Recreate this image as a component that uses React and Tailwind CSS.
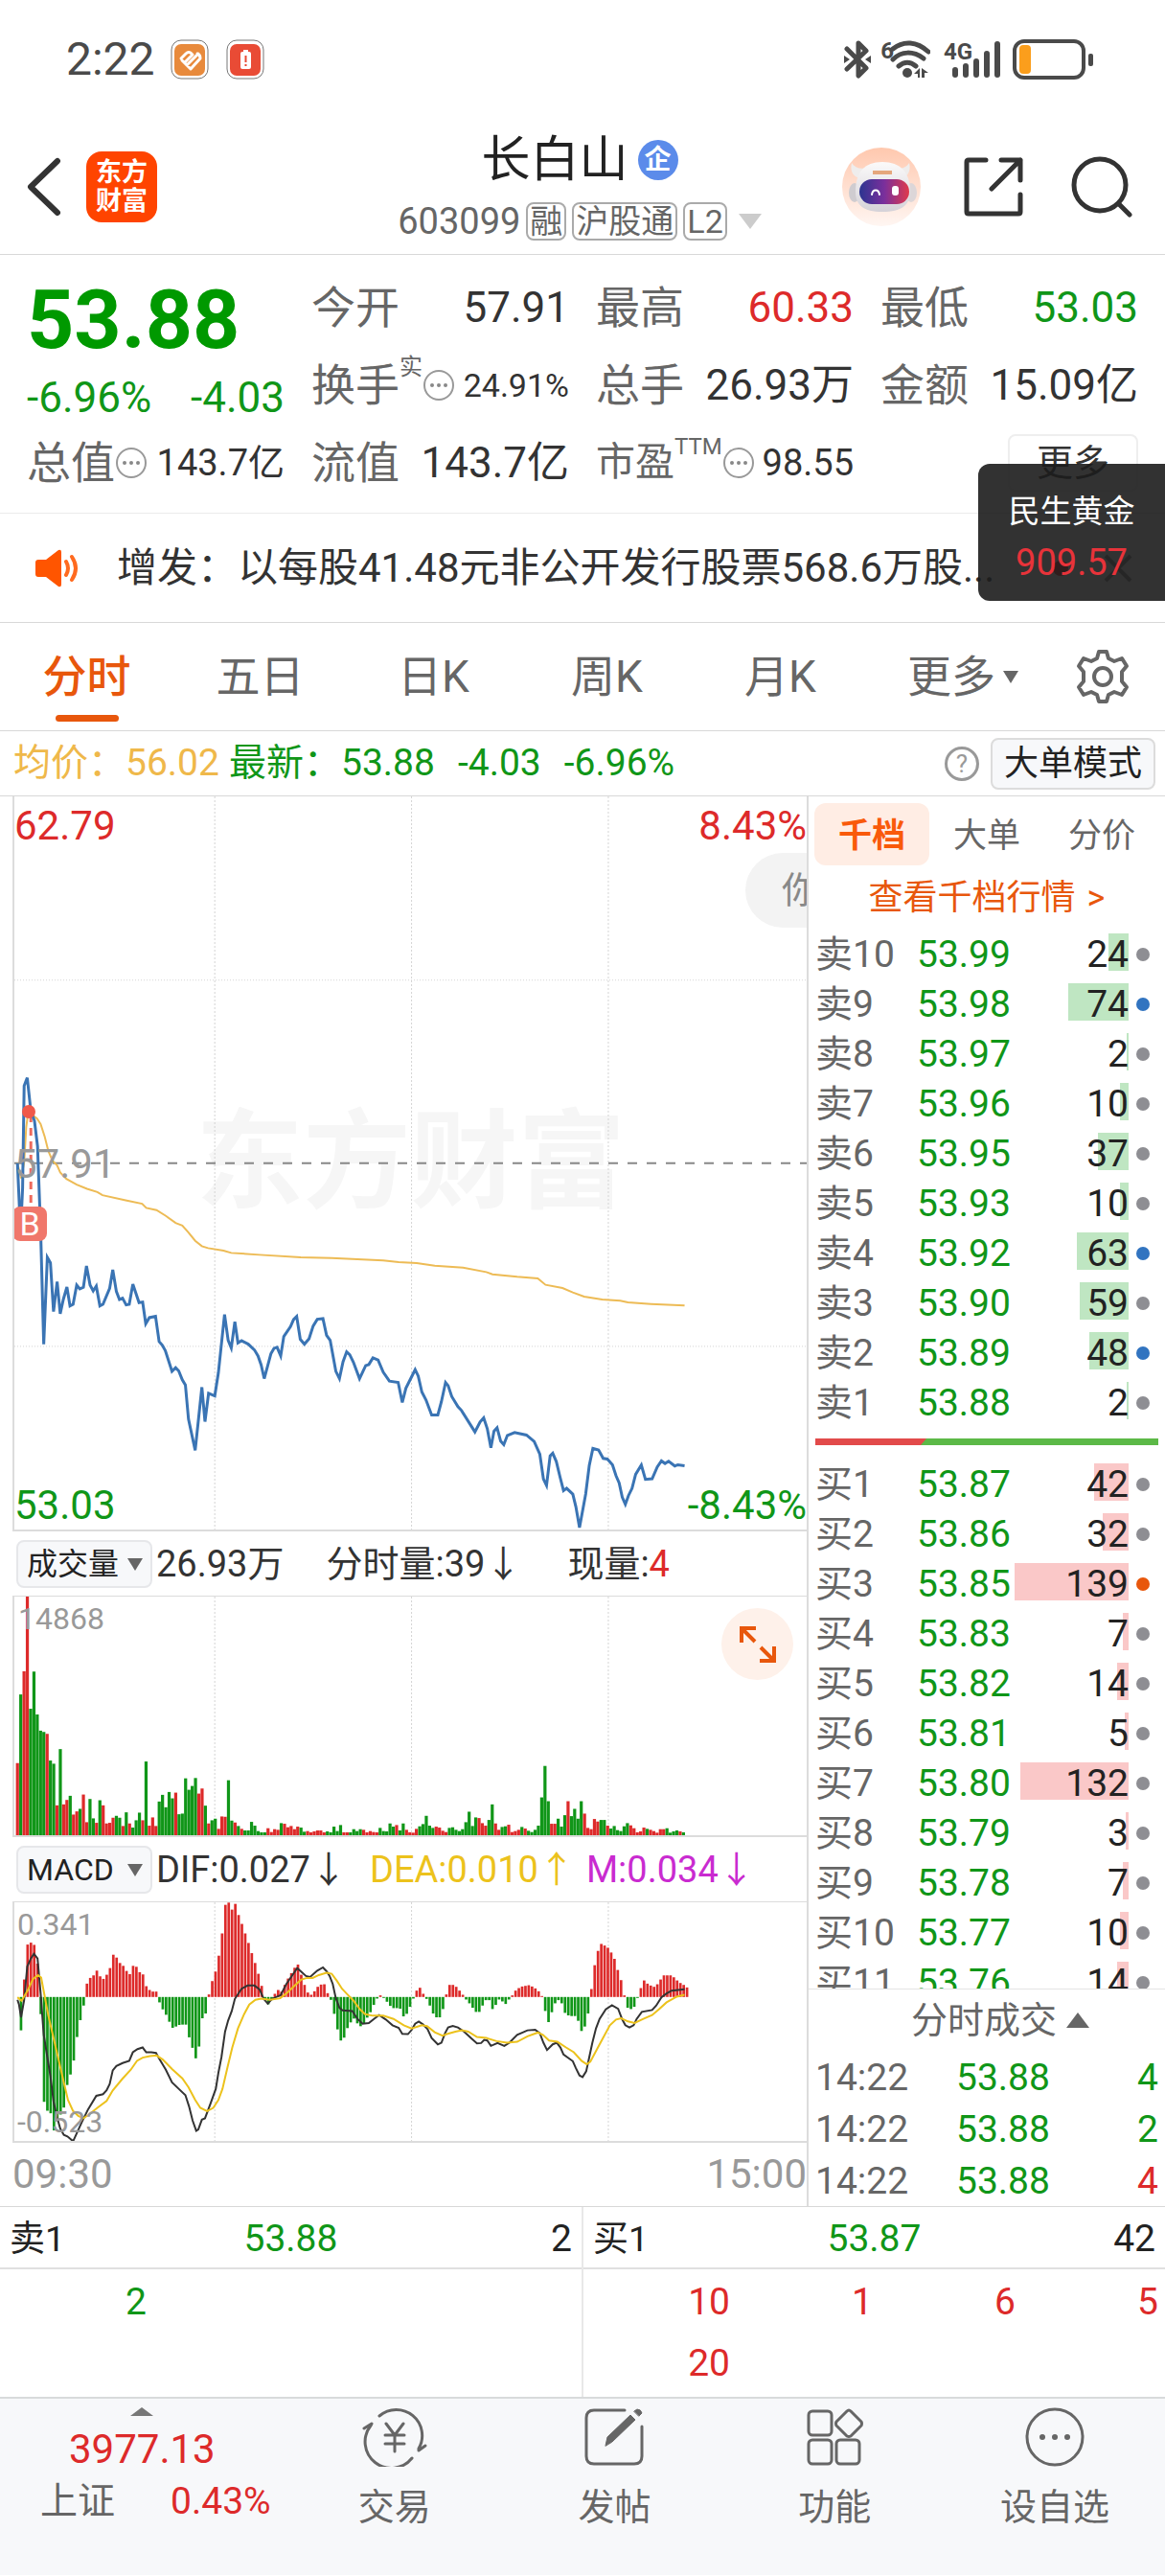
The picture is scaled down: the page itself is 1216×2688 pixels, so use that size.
const ASKS = [
  ["卖10", "53.99", 24, "gray"],
  ["卖9", "53.98", 74, "blue"],
  ["卖8", "53.97", 2, "gray"],
  ["卖7", "53.96", 10, "gray"],
  ["卖6", "53.95", 37, "gray"],
  ["卖5", "53.93", 10, "gray"],
  ["卖4", "53.92", 63, "blue"],
  ["卖3", "53.90", 59, "gray"],
  ["卖2", "53.89", 48, "blue"],
  ["卖1", "53.88", 2, "gray"],
];

const BIDS = [
  ["买1", "53.87", 42, "gray"],
  ["买2", "53.86", 32, "gray"],
  ["买3", "53.85", 139, "orange"],
  ["买4", "53.83", 7, "gray"],
  ["买5", "53.82", 14, "gray"],
  ["买6", "53.81", 5, "gray"],
  ["买7", "53.80", 132, "gray"],
  ["买8", "53.79", 3, "gray"],
  ["买9", "53.78", 7, "gray"],
  ["买10", "53.77", 10, "gray"],
  ["买11", "53.76", 14, "gray"],
];

const TRADES = [
  { time: "14:22", price: "53.88", volume: 4, up: false },
  { time: "14:22", price: "53.88", volume: 2, up: false },
  { time: "14:22", price: "53.88", volume: 4, up: true },
];

const DOT_COLORS = {
  gray: "bg-[#8e8e93]",
  blue: "bg-[#3274c0]",
  orange: "bg-[#e8570c]",
};

// chart series, all on the same horizontal scale (24 = 09:30, 1562 = 15:00)
const PRICE_LINE =
  "30,1183 36,1400 40,1260 43,940 49,915 56,1020 63,1050 69,1130 75,1395 81,1750 88,1478 94,1495 100,1648 107,1554 113,1655 119,1610 126,1571 132,1630 138,1625 145,1565 151,1577 158,1572 164,1505 171,1565 177,1583 183,1568 190,1630 196,1625 209,1575 215,1517 222,1585 228,1610 234,1606 241,1627 247,1625 254,1562 266,1620 273,1618 279,1686 286,1667 298,1663 305,1742 311,1753 317,1770 330,1835 337,1824 343,1834 350,1862 356,1878 362,1985 375,2083 388,1885 394,1993 401,1904 413,1912 420,1840 432,1657 439,1738 445,1762 452,1680 458,1746 465,1739 478,1750 490,1768 497,1787 503,1815 509,1858 522,1780 528,1763 534,1760 541,1787 547,1726 560,1695 566,1673 572,1663 579,1735 587,1750 596,1733 604,1693 612,1672 623,1670 630,1722 637,1738 648,1835 655,1858 662,1805 669,1774 675,1783 682,1806 694,1858 706,1817 712,1814 720,1793 730,1800 740,1838 752,1866 769,1870 777,1933 784,1888 802,1830 808,1850 815,1900 823,1925 834,1972 846,1972 853,1930 861,1870 866,1880 873,1914 885,1946 892,1958 918,2025 928,1994 935,1981 942,2015 949,2075 955,2023 961,2012 968,2054 974,2065 981,2036 995,2027 1018,2035 1033,2055 1044,2095 1051,2173 1057,2193 1064,2100 1069,2092 1076,2118 1083,2165 1090,2209 1096,2202 1108,2220 1114,2260 1121,2325 1133,2220 1140,2130 1147,2077 1158,2082 1167,2108 1175,2110 1185,2128 1192,2163 1198,2185 1204,2230 1210,2252 1216,2225 1223,2202 1230,2158 1241,2129 1249,2174 1262,2172 1272,2135 1280,2116 1287,2124 1294,2117 1306,2132 1312,2128 1325,2131";

const AVERAGE_LINE =
  "30,1183 37,1230 43,1180 47,1070 52,1010 60,1033 68,1043 75,1060 83,1100 90,1145 98,1175 107,1190 113,1212 125,1232 145,1250 165,1263 185,1273 195,1283 240,1299 272,1310 280,1323 300,1330 318,1348 337,1370 350,1378 362,1400 375,1426 388,1443 400,1449 430,1457 445,1464 500,1470 580,1478 640,1480 740,1488 770,1493 805,1496 840,1504 895,1510 940,1524 952,1531 1000,1539 1040,1544 1055,1564 1088,1574 1108,1588 1130,1601 1165,1610 1200,1614 1215,1619 1260,1624 1325,1629";

const DIF_LINE =
  "30,500 33,515 37,555 43,500 49,395 56,370 62,355 69,370 75,480 81,610 88,680 94,740 100,820 107,870 113,905 120,925 127,930 138,945 145,920 155,885 167,845 183,802 196,797 203,785 209,765 215,722 222,708 234,699 247,692 254,665 263,655 273,650 280,665 290,665 299,667 305,685 318,720 330,760 343,780 356,800 363,835 370,880 377,912 381,908 388,877 394,873 405,825 415,780 420,730 426,680 433,600 439,565 446,535 452,497 465,465 477,455 490,455 500,467 508,497 516,512 524,497 541,485 552,450 573,400 580,410 590,425 598,428 612,408 623,398 630,410 636,425 642,450 648,495 655,525 661,533 680,535 690,560 700,575 712,573 722,560 732,548 745,562 758,580 770,588 777,607 788,608 795,595 802,575 809,568 817,577 826,592 834,620 846,640 853,635 860,605 866,587 875,582 885,587 897,600 910,620 922,637 930,636 936,626 942,628 949,645 962,636 975,645 985,635 1000,610 1020,596 1035,594 1044,605 1051,635 1058,658 1069,640 1077,635 1084,650 1090,672 1108,693 1114,715 1121,738 1127,743 1134,725 1140,680 1146,635 1153,590 1160,560 1172,530 1184,517 1196,528 1204,562 1210,580 1218,587 1226,580 1232,560 1242,538 1262,532 1270,518 1280,492 1290,480 1300,471 1325,467";

const DEA_LINE =
  "30,492 38,503 50,470 60,435 70,422 76,430 83,490 90,550 100,620 110,690 120,760 128,815 138,850 148,865 158,873 168,862 185,840 203,818 215,785 234,748 250,720 262,692 273,682 287,677 300,675 312,688 330,718 350,747 362,775 375,815 385,840 398,850 410,840 420,815 428,780 438,710 447,650 458,590 470,545 480,515 492,500 503,496 520,500 540,495 552,480 565,460 580,437 592,431 603,431 615,422 630,415 640,418 650,440 660,465 670,482 682,502 695,530 705,545 720,550 740,550 760,560 780,580 795,590 815,580 825,583 840,602 855,613 865,607 880,600 893,596 905,600 922,617 940,620 960,630 980,635 1000,632 1020,615 1040,603 1050,610 1062,628 1078,632 1095,650 1110,665 1125,692 1135,703 1142,695 1155,655 1165,625 1180,580 1192,562 1202,558 1215,568 1228,573 1245,560 1262,548 1275,530 1290,508 1310,490 1325,484";

// one bar per minute, a negative value is a falling minute
const VOLUMES = [
  227, -443, 516, 751, -398, -515, -380, -329, -325, 319, -235, -225, 94, -271, 97, 111, -124, 65, 75, -83,
  128, 41, -114, -53, 39, -110, 94, 37, 39, 55, -61, -55, 29, -72, 37, -24, -47, -71, 47, -232,
  30, 56, 29, -106, -127, -88, -136, -116, 134, -66, -68, -179, -143, -155, -180, 131, 147, -93, 37, -47,
  -52, 20, 59, 58, -173, -46, 40, -29, 20, -15, -15, -42, -30, -13, -9, -9, 22, 10, 19, 17,
  -38, 36, 25, 29, 19, 27, -24, -11, 13, 9, 12, 15, 15, 9, -12, -9, -27, -13, -32, 9,
  9, -9, -19, -13, -19, 17, 9, 13, 10, 9, -23, -13, -12, -37, -27, 32, -15, -37, 17, 9,
  8, 20, -28, -35, -61, -30, -23, 27, 24, 14, 10, -23, -25, -17, -13, -19, -41, -74, -29, -56,
  54, 38, 30, -48, -97, 37, 17, -26, -28, 33, 10, 13, 17, -26, 21, -14, -10, -17, -30, -119,
  -218, -107, 36, 36, -52, -27, -63, 107, -60, -83, -52, -107, 68, 23, 19, 51, 43, -48, -48, 30,
  -21, -29, -16, -13, -28, -38, 31, 22, 9, 12, 24, -20, 17, 13, 8, 19, 19, -22, -8, -12,
  -15, 12, -9,
];

const MACD_BARS = [
  0, -105, 55, 165, 171, 164, 105, -54, -330, -358, -366, -420, -385, -370, -348, -277, -244, -200, -126, -73,
  -27, 42, 60, 68, 83, 65, 57, 70, 91, 133, 124, 107, 98, 82, 72, 98, 95, 78, 71, 34,
  22, 17, 17, -17, -39, -56, -78, -97, -93, -88, -87, -87, -127, -160, -193, -156, -67, -52, 8, 50,
  80, 130, 200, 290, 297, 275, 293, 258, 230, 200, 170, 138, 107, 73, 35, -8, -23, -10, 10, 22,
  17, 38, 58, 75, 92, 102, 70, 38, 14, 7, 18, 32, 39, 40, 12, -9, -53, -102, -137, -128,
  -98, -80, -68, -83, -92, -83, -65, -48, -25, -5, 5, -3, -15, -28, -35, -35, -37, -61, -53, -31,
  -5, 20, 29, 10, -6, -27, -52, -64, -64, -38, 8, 38, 38, 32, 20, 7, -8, -20, -34, -47,
  -47, -27, -10, -10, -38, -25, -8, -14, -22, -8, 5, 20, 28, 33, 35, 37, 33, 27, 18, 3,
  -44, -79, -48, -20, -10, -20, -50, -58, -60, -60, -75, -107, -93, -52, 25, 100, 145, 167, 162, 155,
  140, 120, 85, 53, 5, -34, -38, -31, -3, 28, 52, 42, 36, 32, 40, 55, 68, 68, 68, 62,
  52, 44, 38, 30,
];

const GRID_X = [413, 795, 1177];

function VerticalGrid({ y1, y2 }) {
  return GRID_X.map((x) => (
    <line
      key={x}
      x1={x}
      x2={x}
      y1={y1}
      y2={y2}
      stroke="#d4d4d4"
      strokeDasharray="2 2"
      vectorEffect="non-scaling-stroke"
    />
  ));
}

function Ellipsis() {
  return (
    <svg viewBox="0 0 34 34" className="size-[34px] shrink-0" aria-hidden="true">
      <circle cx="17" cy="17" r="15" fill="none" stroke="#999" strokeWidth="2" />
      <circle cx="10" cy="17" r="2" fill="#888" />
      <circle cx="17" cy="17" r="2" fill="#888" />
      <circle cx="24" cy="17" r="2" fill="#888" />
    </svg>
  );
}

function StatusBar() {
  return (
    <div className="flex h-[124px] items-center justify-between pl-[69px] pr-[75px] text-[#4a4a4a]">
      <div className="flex items-center">
        <span className="text-[48px] leading-none">2:22</span>
        <svg viewBox="0 0 40 42" className="ml-4 h-[42px] w-10" aria-hidden="true">
          <rect x="1" y="1" width="38" height="40" rx="10" fill="#fff" stroke="#777" />
          <rect x="4" y="5" width="32" height="33" rx="7" fill="#e88a3c" />
          <path
            d="M11 20l5-5q3-3 6 0M12 22l5 5 12-12M17 27l4 4 10-11q0-4-3-5M16 23l7-7"
            fill="none"
            stroke="#fff"
            strokeWidth="3"
            strokeLinecap="round"
            strokeLinejoin="round"
          />
        </svg>
        <svg viewBox="0 0 40 42" className="ml-[18px] h-[42px] w-10" aria-hidden="true">
          <rect x="1" y="1" width="38" height="40" rx="10" fill="#fff" stroke="#777" />
          <rect x="4" y="5" width="32" height="33" rx="7" fill="#e94b35" />
          <rect x="15" y="13" width="11" height="18" rx="2" fill="#fff" />
          <rect x="18" y="11" width="5" height="3" fill="#fff" />
          <path d="M20.500 17v7M20.500 26v2" stroke="#e94b35" strokeWidth="2" />
        </svg>
      </div>
      <div className="flex items-center">
        <svg viewBox="0 0 28 40" className="h-10 w-7" aria-hidden="true">
          <path
            d="M3 9l20 20-8 8V3l8 8L3 30"
            fill="none"
            stroke="currentColor"
            strokeWidth="5"
            strokeLinecap="round"
            strokeLinejoin="round"
          />
          <path d="M0 16l6 4-6 4zM28 16l-6 4 6 4z" fill="currentColor" />
        </svg>
        <span className="ml-[10px] self-start text-[24px] font-bold leading-none">6</span>
        <svg viewBox="0 0 42 40" className="-ml-1 h-10 w-[42px]" aria-hidden="true">
          <path
            d="M3 9C14 0 28 1 40 12M3 20c9-9 21-9 32-1M9 27c6-5 12-5 18 0"
            fill="none"
            stroke="currentColor"
            strokeWidth="5"
            strokeLinecap="round"
          />
          <circle cx="18" cy="34" r="5" fill="currentColor" />
          <path d="M25 35l6-6v10h-2v-4zM33 29l7 5h-4v5h-3z" fill="currentColor" />
        </svg>
        <div className="relative ml-[14px] h-10 w-[60px]">
          <span className="absolute left-0 top-0 text-[24px] font-bold leading-none">4G</span>
          <svg viewBox="0 0 60 40" className="h-10 w-[60px]" aria-hidden="true">
            <path
              d="M12 31v5M23 27v9M34 22v14M45 14v22M56 4v32"
              stroke="currentColor"
              strokeWidth="6"
              strokeLinecap="round"
            />
          </svg>
        </div>
        <svg viewBox="0 0 84 42" className="ml-3 h-[42px] w-[84px]" aria-hidden="true">
          <rect x="2" y="2" width="72" height="38" rx="10" fill="#fff" stroke="currentColor" strokeWidth="4" />
          <rect x="7" y="6" width="12" height="30" rx="4" fill="#fb9e1c" />
          <rect x="79" y="15" width="5" height="13" rx="2" fill="currentColor" />
        </svg>
      </div>
    </div>
  );
}

function Robot() {
  return (
    <svg viewBox="0 0 82 82" className="size-[82px]" aria-hidden="true">
      <defs>
        <linearGradient id="halo" x1="0" y1="0" x2="0" y2="1">
          <stop offset="0" stopColor="#ffc8ae" />
          <stop offset="1" stopColor="#fff6f2" />
        </linearGradient>
        <linearGradient id="visor" x1="0" y1="0" x2="1" y2="0">
          <stop offset="0" stopColor="#2c3590" />
          <stop offset="0.5" stopColor="#7a2f9c" />
          <stop offset="1" stopColor="#e03a4c" />
        </linearGradient>
        <linearGradient id="shell" x1="0" y1="0" x2="0" y2="1">
          <stop offset="0" stopColor="#fbfafa" />
          <stop offset="1" stopColor="#d5d2d8" />
        </linearGradient>
      </defs>
      <circle cx="41" cy="41" r="41" fill="url(#halo)" />
      <path d="M10 16c-2 8 1 14 8 16l8-11c-7 2-13 0-16-5zM70 16c2 8-1 14-8 16l-8-11c7 2 13 0 16-5z" fill="#efedec" />
      <ellipse cx="13" cy="47" rx="6" ry="10" fill="#cfccd0" />
      <ellipse cx="72" cy="47" rx="6" ry="10" fill="#dcd6d8" />
      <path d="M14 46c0-20 9-31 28-31s29 11 29 31c0 14-9 21-29 21S14 60 14 46z" fill="url(#shell)" />
      <rect x="18" y="33" width="52" height="26" rx="13" fill="url(#visor)" />
      <path d="M31 49c1-6 7-6 8 0" fill="none" stroke="#fff" strokeWidth="2" strokeLinecap="round" />
      <rect x="52" y="40" width="7" height="10" rx="3" fill="#fff" />
      <path d="M32 26h20" stroke="#e5a77d" strokeWidth="4" />
    </svg>
  );
}

function Header() {
  return (
    <header className="grid h-[142px] grid-cols-[1fr_auto_1fr] items-center border-b border-[#d8d8d8] pl-7 pr-[34px]">
      <div className="flex items-center">
        <button aria-label="返回" className="text-[#333]">
          <svg viewBox="0 0 36 62" className="h-[62px] w-9" aria-hidden="true">
            <path
              d="M32 4L4 31l28 27"
              fill="none"
              stroke="currentColor"
              strokeWidth="6"
              strokeLinecap="round"
              strokeLinejoin="round"
            />
          </svg>
        </button>
        <div className="ml-[26px] flex size-[74px] flex-col items-center justify-center rounded-2xl bg-[#ff4400] text-[27px] font-bold leading-[30px] text-white">
          <span>东方</span>
          <span>财富</span>
        </div>
      </div>
      <div className="flex flex-col items-center gap-4">
        <h1 className="flex items-center gap-[10px] text-[51px] leading-[56px] text-[#222]">
          长白山
          <span className="flex size-[42px] items-center justify-center rounded-full bg-[#5b8bea] text-[28px] font-bold leading-none text-white">
            企
          </span>
        </h1>
        <div className="flex items-center gap-[6px] text-[34px] leading-none text-[#666]">
          <span className="text-[38px]">603099</span>
          <span className="flex h-10 items-center rounded-lg border-2 border-[#aaa] px-[2px]">融</span>
          <span className="flex h-10 items-center rounded-lg border-2 border-[#aaa] px-[2px]">沪股通</span>
          <span className="flex h-10 items-center rounded-lg border-2 border-[#aaa] px-[2px]">L2</span>
          <svg viewBox="0 0 24 16" className="ml-[6px] h-4 w-6" aria-hidden="true">
            <path d="M0 0h24L12 16z" fill="#ccc" />
          </svg>
        </div>
      </div>
      <div className="flex items-center justify-end text-[#333]">
        <button aria-label="智能助手">
          <Robot />
        </button>
        <button aria-label="分享" className="ml-[45px]">
          <svg viewBox="0 0 62 62" className="size-[62px]" aria-hidden="true">
            <path
              d="M23 3H5q-2 0-2 2v52q0 2 2 2h52q2 0 2-2V39M39 3h20v21M59 3L29 33"
              fill="none"
              stroke="currentColor"
              strokeWidth="5"
              strokeLinecap="round"
              strokeLinejoin="round"
            />
          </svg>
        </button>
        <button aria-label="搜索" className="ml-[50px]">
          <svg viewBox="0 0 64 64" className="size-16" aria-hidden="true">
            <circle cx="30" cy="30" r="27" fill="none" stroke="currentColor" strokeWidth="5" />
            <path d="M50 50l11 11" stroke="currentColor" strokeWidth="5" strokeLinecap="round" />
          </svg>
        </button>
      </div>
    </header>
  );
}

function Stat({ label, note, info, value, color = "text-[#333]", size = "text-[44px]", labelSize = "text-[46px]" }) {
  return (
    <div className="flex h-[81px] items-center justify-between whitespace-nowrap leading-none">
      <span className={`flex items-center text-[#666] ${labelSize}`}>
        {label}
        {note && <sup className="-top-2 self-start text-[24px] leading-none">{note}</sup>}
        {info && <Ellipsis />}
      </span>
      <span className={`${size} ${color}`}>{value}</span>
    </div>
  );
}

function Quote() {
  return (
    <section className="grid grid-cols-4 gap-x-7 border-b border-[#ececec] px-7 pb-3 pt-[14px]">
      <div className="whitespace-nowrap leading-none">
        <div className="flex h-[108px] items-center text-[86px] font-bold text-[#009900]">53.88</div>
        <div className="flex h-[54px] items-center justify-between text-[44px] text-[#109618]">
          <span>-6.96%</span>
          <span>-4.03</span>
        </div>
        <Stat label="总值" info value="143.7亿" size="text-[38px]" />
      </div>
      <div>
        <Stat label="今开" value="57.91" />
        <Stat label="换手" note="实" info value="24.91%" size="text-[34px]" />
        <Stat label="流值" value="143.7亿" />
      </div>
      <div>
        <Stat label="最高" value="60.33" color="text-[#dd2a2a]" />
        <Stat label="总手" value="26.93万" />
        <Stat label="市盈" note="TTM" info value="98.55" size="text-[38px]" labelSize="text-[41px]" />
      </div>
      <div>
        <Stat label="最低" value="53.03" color="text-[#109618]" />
        <Stat label="金额" value="15.09亿" />
        <div className="flex h-[81px] items-center justify-end">
          <button className="h-[60px] rounded-lg border-2 border-[#eee] px-7 text-[38px] leading-none text-[#333]">
            更多
          </button>
        </div>
      </div>
    </section>
  );
}

function News() {
  return (
    <section className="flex h-[114px] items-center border-b border-[#d8d8d8] pl-9 pr-[33px] text-[#333]">
      <svg viewBox="0 0 48 40" className="h-10 w-12 shrink-0" aria-hidden="true">
        <path d="M4 11h8L25 1q3-1 3 2v34q0 3-3 2L12 29H4q-3 0-3-3V14q0-3 3-3z" fill="#ff5500" />
        <path d="M33 13q4 7 0 14M39 8q8 12 0 24" fill="none" stroke="#ff6a1f" strokeWidth="4" strokeLinecap="round" />
      </svg>
      <p className="ml-[38px] flex-1 whitespace-nowrap text-[42px] leading-none">
        增发：以每股41.48元非公开发行股票568.6万股...
      </p>
      <span className="mr-9 size-4 rounded-full bg-[#dd2a2a]" />
      <button aria-label="关闭">
        <svg viewBox="0 0 32 32" className="size-8" aria-hidden="true">
          <path d="M3 3l26 26M29 3L3 29" stroke="#888" strokeWidth="4" />
        </svg>
      </button>
    </section>
  );
}

function PeriodTabs() {
  return (
    <nav className="flex h-[113px] border-b border-[#d8d8d8] text-[46px] leading-none text-[#666]">
      <button className="relative flex-[181] text-[#e8570c]">
        <span className="font-medium">分时</span>
        <span className="absolute bottom-[9px] left-1/2 h-[7px] w-[66px] -translate-x-1/2 rounded-full bg-[#e8570c]" />
      </button>
      <button className="flex-[181]">五日</button>
      <button className="flex-[181]">日K</button>
      <button className="flex-[181]">周K</button>
      <button className="flex-[181]">月K</button>
      <button className="flex flex-[200] items-center justify-center gap-2">
        更多
        <svg viewBox="0 0 16 13" className="h-[13px] w-4" aria-hidden="true">
          <path d="M0 0h16L8 13z" fill="currentColor" />
        </svg>
      </button>
      <button aria-label="设置" className="flex flex-[111] items-center">
        <svg viewBox="0 0 56 58" className="ml-[18px] h-[58px] w-14" aria-hidden="true">
          <path
            d="M24 3h8l2 7 6 3 8-3 5 8-5 6v10l5 6-5 8-8-3-6 3-2 7h-8l-2-7-6-3-8 3-5-8 5-6V24l-5-6 5-8 8 3 6-3z"
            fill="none"
            stroke="currentColor"
            strokeWidth="4"
            strokeLinejoin="round"
          />
          <circle cx="28" cy="29" r="9" fill="none" stroke="currentColor" strokeWidth="4" />
        </svg>
      </button>
    </nav>
  );
}

function PriceSummary() {
  return (
    <div className="flex h-[68px] items-center whitespace-nowrap border-b border-[#d8d8d8] pl-[14px] pr-[10px] text-[39px] leading-none">
      <span className="text-[#efb84a]">均价：56.02</span>
      <span className="ml-[10px] text-[#109618]">最新：53.88</span>
      <span className="ml-6 text-[#109618]">-4.03</span>
      <span className="ml-6 text-[#109618]">-6.96%</span>
      <button
        aria-label="说明"
        className="ml-auto flex size-9 items-center justify-center rounded-full border-3 border-[#999] text-[26px] leading-none text-[#999]"
      >
        ?
      </button>
      <button className="ml-3 h-[54px] rounded-lg border-2 border-[#dcdcdc] bg-[#f7f8fa] px-3 text-[36px] leading-none text-[#222]">
        大单模式
      </button>
    </div>
  );
}

function PriceChart() {
  return (
    <div className="relative h-[767px] overflow-hidden border-b-2 border-l-2 border-[#dcdcdc] text-[42px] leading-none">
      <div className="absolute inset-0 flex items-center justify-center text-[112px] font-bold text-[#f6f6f6]">
        东方财富
      </div>
      <svg
        viewBox="24 33 1538 2298"
        preserveAspectRatio="none"
        className="absolute inset-0 h-full w-full"
        aria-hidden="true"
      >
        <VerticalGrid y1={33} y2={2331} />
        <path d="M24 609H1562M24 1757H1562" stroke="#d4d4d4" strokeDasharray="1 2" vectorEffect="non-scaling-stroke" />
        <path d="M24 1183H1562" stroke="#888" strokeWidth="2" strokeDasharray="10 10" vectorEffect="non-scaling-stroke" />
        <path d="M56 1030V1320" stroke="#ee6a5c" strokeWidth="3" strokeDasharray="8 6" vectorEffect="non-scaling-stroke" />
        <polyline points={AVERAGE_LINE} fill="none" stroke="#edbb55" strokeWidth="2" vectorEffect="non-scaling-stroke" />
        <polyline points={PRICE_LINE} fill="none" stroke="#3a74b4" strokeWidth="3" vectorEffect="non-scaling-stroke" />
      </svg>
      <span className="absolute left-0 top-[10px] text-[#dd2a2a]">62.79</span>
      <span className="absolute right-0 top-[10px] text-[#dd2a2a]">8.43%</span>
      <span className="absolute left-0 top-[363px] text-[#999]">57.91</span>
      <span className="absolute bottom-1 left-0 text-[#109618]">53.03</span>
      <span className="absolute bottom-1 right-0 text-[#109618]">-8.43%</span>
      <span className="absolute -right-16 top-[59px] flex h-[78px] w-32 items-center rounded-full bg-[#f3f3f3] pl-[38px] text-[38px] text-[#888]">
        你
      </span>
      <span className="absolute left-2 top-[322px] size-[14px] rounded-full bg-[#f0584a]" />
      <span className="absolute -left-[2px] top-[428px] flex size-9 items-center justify-center rounded-lg bg-[#f0776b] text-[34px] text-white">
        B
      </span>
    </div>
  );
}

function IndicatorPicker({ label, name, options }) {
  return (
    <div className="relative ml-1">
      <select
        aria-label={label}
        defaultValue={name}
        className="h-[50px] w-[142px] appearance-none rounded-lg border-2 border-[#e6e7ea] bg-[#f7f8fa] pl-[9px] text-[32px] leading-none text-[#222]"
      >
        {options.map((option) => (
          <option key={option}>{option}</option>
        ))}
      </select>
      <svg
        viewBox="0 0 16 13"
        className="pointer-events-none absolute right-[10px] top-[19px] h-[13px] w-4"
        aria-hidden="true"
      >
        <path d="M0 0h16L8 13z" fill="#666" />
      </svg>
    </div>
  );
}

function VolumeChart() {
  return (
    <div className="relative h-[252px] border-b-2 border-l-2 border-t border-[#dcdcdc]">
      <svg
        viewBox="24 226 1538 751"
        preserveAspectRatio="none"
        className="absolute inset-0 h-full w-full"
        aria-hidden="true"
      >
        <VerticalGrid y1={226} y2={977} />
        {VOLUMES.map((v, i) => (
          <rect
            key={i}
            x={27 + i * 6.4}
            y={977 - Math.abs(v)}
            width="6"
            height={Math.abs(v)}
            fill={v > 0 ? "#dd2a2a" : "#109618"}
          />
        ))}
      </svg>
      <span className="absolute left-1 top-[7px] text-[32px] leading-none text-[#999]">14868</span>
      <button
        aria-label="全屏"
        className="absolute right-[14px] top-3 flex size-[75px] items-center justify-center rounded-full bg-[#fef1ea]"
      >
        <svg viewBox="0 0 38 38" className="size-[38px]" aria-hidden="true">
          <path
            d="M2 17V2h15M2 2l14 14M36 21v15H21M36 36L22 22"
            fill="none"
            stroke="#e8570c"
            strokeWidth="4"
          />
        </svg>
      </button>
    </div>
  );
}

function MacdChart() {
  return (
    <div className="relative h-[252px] border-b-2 border-l-2 border-t border-[#dcdcdc] text-[32px] leading-none text-[#999]">
      <svg
        viewBox="24 193 1538 751"
        preserveAspectRatio="none"
        className="absolute inset-0 h-full w-full"
        aria-hidden="true"
      >
        <VerticalGrid y1={193} y2={944} />
        {MACD_BARS.map((v, i) => (
          <rect
            key={i}
            x={28 + i * 6.4}
            y={v > 0 ? 491 - v : 491}
            width="5"
            height={Math.abs(v)}
            fill={v > 0 ? "#dd2a2a" : "#109618"}
          />
        ))}
        <polyline points={DIF_LINE} fill="none" stroke="#333" strokeWidth="2" vectorEffect="non-scaling-stroke" />
        <polyline points={DEA_LINE} fill="none" stroke="#ecc21c" strokeWidth="2" vectorEffect="non-scaling-stroke" />
      </svg>
      <span className="absolute left-[3px] top-[7px]">0.341</span>
      <span className="absolute bottom-1 left-[3px]">-0.523</span>
    </div>
  );
}

function Charts() {
  return (
    <div className="min-w-0 pl-[13px]">
      <PriceChart />
      <div className="flex h-[67px] items-center whitespace-nowrap text-[38px] leading-none text-[#333]">
        <IndicatorPicker label="副图一" name="成交量" options={["成交量", "量比"]} />
        <span className="ml-1">26.93万</span>
        <span className="ml-11">分时量:39↓</span>
        <span className="ml-12">
          现量:<span className="text-[#dd2a2a]">4</span>
        </span>
      </div>
      <VolumeChart />
      <div className="flex h-[67px] items-center whitespace-nowrap text-[38px] leading-none text-[#333]">
        <IndicatorPicker label="副图二" name="MACD" options={["MACD", "KDJ"]} />
        <span className="ml-1">DIF:0.027↓</span>
        <span className="ml-6 text-[#ecc21c]">DEA:0.010↑</span>
        <span className="ml-3 text-[#c92bd0]">M:0.034↓</span>
      </div>
      <MacdChart />
      <div className="flex h-[66px] items-center justify-between text-[42px] leading-none text-[#999]">
        <span>09:30</span>
        <span>15:00</span>
      </div>
    </div>
  );
}

function DepthTable({ rows, side }) {
  return (
    <table className="w-full text-[39px] leading-none">
      <tbody>
        {rows.map(([name, price, volume, dot]) => (
          <tr key={name} className="h-[52px]">
            <th scope="row" className="w-[106px] p-0 text-left font-normal text-[#666]">
              {name}
            </th>
            <td className="p-0 text-[#109618]">{price}</td>
            <td className="relative w-[123px] p-0 text-right text-[#222]">
              <span
                className={`absolute right-0 top-1 h-[39px] ${side === "ask" ? "bg-[#bfe6c2]" : "bg-[#fac8c8]"}`}
                style={{ width: `${Math.max(1, Math.round(volume * 0.857))}px` }}
              />
              <span className="relative">{volume}</span>
            </td>
            <td className="w-[31px] p-0">
              <span className={`ml-2 block size-[14px] rounded-full ${DOT_COLORS[dot]}`} />
            </td>
          </tr>
        ))}
      </tbody>
    </table>
  );
}

function OrderBook() {
  return (
    <aside className="border-l-2 border-[#dcdcdc] pt-[7px] leading-none">
      <div className="flex h-[65px] px-[6px] text-[35px] text-[#666]">
        <button className="flex-1 rounded-xl bg-[#ffede4] pt-1 font-bold text-[#f95a0a]">千档</button>
        <button className="flex-1 pt-1">大单</button>
        <button className="flex-1 pt-1">分价</button>
      </div>
      <a href="#depth" className="flex h-[67px] items-center justify-center gap-3 text-[36px] text-[#e8570c]">
        查看千档行情 <span>&gt;</span>
      </a>
      <div id="depth" className="h-[1105px] overflow-hidden px-[7px]">
        <DepthTable rows={ASKS} side="ask" />
        <div className="mb-[15px] mt-[11px] flex h-[7px] bg-[#5cb947]">
          <svg viewBox="0 0 116 7" className="h-[7px] w-[116px]" aria-hidden="true">
            <path d="M0 0h116l-6 7H0z" fill="#e24a4a" />
          </svg>
        </div>
        <DepthTable rows={BIDS} side="bid" />
      </div>
      <button className="flex h-16 w-full items-center justify-center gap-[10px] border-t border-[#e4e4e4] pl-7 text-[38px] text-[#666]">
        分时成交
        <svg viewBox="0 0 24 16" className="h-4 w-6" aria-hidden="true">
          <path d="M12 0l12 16H0z" fill="currentColor" />
        </svg>
      </button>
      <table className="w-full text-[39px]">
        <tbody>
          {TRADES.map((t, i) => (
            <tr key={i} className="h-[54px]">
              <td className="w-[154px] p-0 pl-[7px] pt-1 text-[#666]">{t.time}</td>
              <td className="p-0 pt-1 text-[#109618]">{t.price}</td>
              <td className={`p-0 pr-[7px] pt-1 text-right ${t.up ? "text-[#dd2a2a]" : "text-[#109618]"}`}>
                {t.volume}
              </td>
            </tr>
          ))}
        </tbody>
      </table>
    </aside>
  );
}

function Queue({ name, price, volume, orders, color }) {
  return (
    <div className="flex-1">
      <div className="grid h-[65px] grid-cols-3 items-center border-b-2 border-[#e0e0e0] px-[10px] pt-1 text-[#222]">
        <span className="text-[37px]">{name}</span>
        <span className="text-center text-[#109618]">{price}</span>
        <span className="text-right">{volume}</span>
      </div>
      <div className={`grid grid-cols-4 pl-1 pr-[7px] pt-[2px] text-right ${color}`}>
        {orders.map((n, i) => (
          <span key={i} className="flex h-16 items-center justify-end">
            {n}
          </span>
        ))}
      </div>
    </div>
  );
}

function NavItem({ label, children }) {
  return (
    <button className="flex flex-[230] flex-col items-center gap-[23px] text-[38px] leading-none text-[#666]">
      <svg
        viewBox="0 0 70 62"
        className="h-[62px] w-[70px]"
        fill="none"
        stroke="currentColor"
        strokeWidth="3"
        strokeLinecap="round"
        strokeLinejoin="round"
        aria-hidden="true"
      >
        {children}
      </svg>
      {label}
    </button>
  );
}

function BottomNav() {
  return (
    <nav className="flex h-[186px] items-start border-t-2 border-[#d8dadb] bg-[#f7f8fa] pt-[9px]">
      <button className="flex flex-[297] flex-col items-center text-[39px] leading-none text-[#666]">
        <svg viewBox="0 0 24 9" className="h-[9px] w-6" aria-hidden="true">
          <path d="M12 0l12 9H0z" fill="#777" />
        </svg>
        <span className="mt-[14px] text-[42px] text-[#dd2a2a]">3977.13</span>
        <span className="mt-[14px] flex items-center gap-[58px] pl-7">
          上证 <span className="text-[#dd2a2a]">0.43%</span>
        </span>
      </button>
      <NavItem label="交易">
        <path d="M19 9A27 27 0 0 1 60 43l0 2 7-5M53 53A27 27 0 0 1 10 19l1-2-8 5" />
        <path d="M26 17l9 12 9-12M25 29h20M25 38h20M35 29v17" />
      </NavItem>
      <NavItem label="发帖">
        <path d="M46 3H14q-8 0-8 8v40q0 8 8 8h42q8 0 8-8V20" />
        <path d="M26 40l2-9 24-23 5 5-24 23zM56 4l3-2q4 0 5 4l-3 3z" fill="currentColor" strokeWidth="1" />
      </NavItem>
      <NavItem label="功能">
        <rect x="8" y="4" width="24" height="25" rx="4" />
        <rect x="8" y="34" width="24" height="25" rx="4" />
        <rect x="37" y="34" width="24" height="25" rx="4" />
        <path d="M48 4q2-2 4 0l11 11q1 2 0 4L52 30q-2 1-4 0L37 19q-1-2 0-4z" />
      </NavItem>
      <NavItem label="设自选">
        <circle cx="35" cy="31" r="29" />
        <path d="M22 31h.01M35 31h.01M48 31h.01" strokeWidth="6" />
      </NavItem>
    </nav>
  );
}

export default function App() {
  return (
    <div className="relative min-h-screen bg-white font-[Roboto,'Noto_Sans_CJK_SC',sans-serif]">
      <StatusBar />
      <Header />
      <Quote />
      <News />
      <PeriodTabs />
      <PriceSummary />
      <main className="grid grid-cols-[minmax(0,1fr)_374px] border-b border-[#d8d8d8]">
        <Charts />
        <OrderBook />
      </main>
      <section className="flex min-h-[198px] divide-x-2 divide-[#e8e8e8] text-[39px] leading-none">
        <Queue name="卖1" price="53.88" volume={2} orders={[2]} color="text-[#109618]" />
        <Queue name="买1" price="53.87" volume={42} orders={[10, 1, 6, 5, 20]} color="text-[#dd2a2a]" />
      </section>
      <BottomNav />

      {/* floating gold price, docked to the right edge */}
      <div className="absolute right-0 top-[484px] flex h-[143px] w-[195px] flex-col items-center justify-center gap-[18px] rounded-l-xl bg-[#1c1c1c]/90 pt-3 leading-none">
        <span className="text-[33px] text-white">民生黄金</span>
        <span className="text-[38px] text-[#e8333a]">909.57</span>
      </div>
    </div>
  );
}
